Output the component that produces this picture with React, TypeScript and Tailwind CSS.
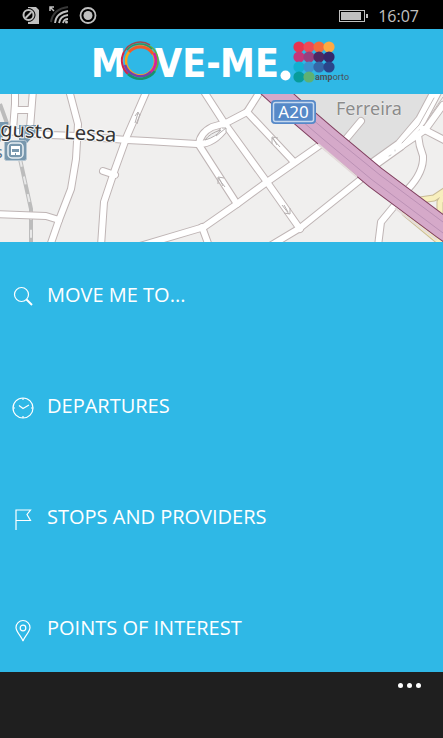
import React from "react";

const roads = [
  "M15 -4V10L13 36", "M33 -4L30 34", "M15 16H31", "M-4 120L46 122L59 126",
  "M-4 36L50 41L77 42L127 46L147 47L197 50",
  "M69 -4L78 30L76 65L71 95L59 126L50 152",
  "M147 -4L127 42L114 78L104 108L101 152", "M103 77L115 81",
  "M203 -4L225 30L267 88L300 135",
  "M199 50Q200 39 212 33L226 29L247 18L261 -4", "M199 50Q214 50 226 33",
  "M199 51L237 110", "M247 18L294 68",
  "M140 152L204 133L237 110L267 88L320 51", "M202 133L209 152", "M270 152L300 134L360 86",
  "M361 27L346 45", "M443 11L425 36L400 53", "M423 35L450 49",
  "M418 41Q419 52 423 62Q424 78 408 95", "M395 111L381 128L378 152",
];
const motorway = "M262 -14L293 14L328 44L376 84L443 134L460 146";

function CityMap() {
  return (
    <svg className="block h-[148px] w-full bg-[#f0efee]" viewBox="0 0 443 148" preserveAspectRatio="xMidYMid slice" role="img" aria-label="Map">
      <path d="M290 -2H434L421 30L400 53L376 71L330 40Z" fill="#e0e0e0" />
      <path d="M0 10L8 32M20 65L31 115V150" fill="none" stroke="#bcbcbc" strokeWidth="4" />
      <path d="M20 65L31 115V150" fill="none" stroke="#e8e8e8" strokeWidth="2" strokeDasharray="8 10" />
      <g fill="none" strokeLinejoin="round" strokeLinecap="round">
        {roads.map((d) => <path key={d} d={d} stroke="#bfb5b5" strokeWidth="8" />)}
        <path d="M437 -4L421 26L400 51L372 71" stroke="#bfb5b5" strokeWidth="12" />
        {roads.map((d) => <path key={d} d={d} stroke="#fff" strokeWidth="6" />)}
        <path d="M437 -4L421 26L400 51L372 71" stroke="#fff" strokeWidth="10" />
        <path d="M434 4L419 31L402 49M443 3L428 25" stroke="#c4bcbc" strokeWidth="1" />
        <path d="M389 62L391 61M395 57V56" stroke="#ccc" strokeWidth="1" />
        <path d="M420 106L434 104L446 96M446 98L440 108V124M405 119L440 148" stroke="#c9bc98" strokeWidth="7" />
        <path d="M420 106L434 104L446 96M446 98L440 108V124M405 119L440 148" stroke="#f7efbd" strokeWidth="5" />
      </g>
      <g fill="none" stroke="#b5b0b0" strokeWidth="1">
        <path d="M135 29L138 19M137 30L140 20M135 22L138 18L140 22" />
        <path d="M205 46Q210 39 221 36Q216 43 205 46Z" fill="#eee" />
        <path d="M216 42L226 34M222 34H226V38" />
        <path d="M218 84L225 93M218 90V83L224 84M219 84L223 92" />
        <path d="M272 44L280 53M272 50V43L278 44M273 44L277 51" />
        <path d="M282 111L289 120M290 114V120L284 119M284 111L288 118" />
      </g>
      <path d={motorway} fill="none" stroke="#80405f" strokeWidth="23" />
      <path d={motorway} fill="none" stroke="#d5a9c9" strokeWidth="21" />
      <path d="M318 50L357 83M395 114L437 146" fill="none" stroke="#e5dcdc" strokeWidth="2" />
      <path d="M289 16L323 45L371 85L443 139M298 13L332 42L380 81L443 128" fill="none" stroke="#bb91b5" strokeWidth="1" />

      <path d="M0 28H8V34L0 48ZM19 31H36V39L27 49H19Z" fill="#7897ad" />
      <rect x="4.500" y="46.500" width="22" height="20" rx="2" fill="#7897ad" stroke="#b6c7d3" />
      <rect x="8" y="49" width="15" height="15" rx="4" fill="none" stroke="#e8eff3" strokeWidth="1.500" />
      <path d="M11 52H20V61H11Z" fill="#fff" /><path d="M12 55H19V58H12ZM15 59H16V61H15Z" fill="#7897ad" />
      <g fontFamily="'Noto Sans', 'Open Sans', sans-serif">
        <text x="0" y="42" fontSize="20" fill="#333" stroke="#f7f7f7" strokeWidth="2" paintOrder="stroke" transform="rotate(3 0 42)">gusto</text>
        <text x="64" y="45" fontSize="20" fill="#333" stroke="#f7f7f7" strokeWidth="2" paintOrder="stroke" transform="rotate(3 64 45)">Lessa</text>
        <text x="-5" y="64" fontSize="16" fill="#54738a">s</text>
        <rect x="271.500" y="6.500" width="44" height="23" rx="3" fill="#5689c8" stroke="#5689c8" />
        <rect x="273.500" y="8.500" width="40" height="19" rx="2" fill="none" stroke="#c5d8ee" strokeWidth="1.500" />
        <text x="293.500" y="24" fontSize="17" fill="#fff" textAnchor="middle">A20</text>
        <text x="336" y="21" fontSize="18" fill="#8b8b8b" stroke="#eee" strokeWidth="1" paintOrder="stroke">Ferreira</text>
      </g>
    </svg>
  );
}

const dots = [
  ["#e8344f", "#ee4a55", "#f46b3c", "#fda943"],
  ["#c43679", "#98407f", "#4e2862", "#35286a"],
  ["#11b0d2", "#3b94cf", "#3468a8", "#2a458a"],
  ["#079c9b", "#5eb173"],
];

function Logo() {
  return (
    <svg className="block h-[65px] w-[260px]" viewBox="92 29 260 65" role="img" aria-label="MOVE-ME. amporto">
      <g fill="#fff" fontFamily="'DejaVu Sans Condensed', 'DejaVu Sans', sans-serif" fontWeight="700" fontStretch="condensed" fontSize="39">
        <text x="91" y="77">M</text>
        <text x="155" y="77">VE-</text>
        <text x="220" y="77">ME</text>
      </g>
      <circle cx="285.500" cy="75.500" r="5" fill="#fff" />
      <circle cx="140.500" cy="61" r="16" fill="#2fb8e6" />
      <g fill="none">
        <circle cx="140.500" cy="61" r="14.500" stroke="#f9a51b" strokeWidth="2.500" />
        <path d="M129 52A15 15 0 0 1 153 54" stroke="#f15a29" strokeWidth="3" />
        <path d="M154 53A16 16 0 0 1 147 75" stroke="#d6219c" strokeWidth="3" />
        <path d="M151 72A16 16 0 0 1 125 65" stroke="#7442ad" strokeWidth="2.500" />
        <path d="M124 52A18 18 0 0 0 128 74" stroke="#d42445" strokeWidth="2" />
        <path d="M128 74A18 18 0 0 0 155 71" stroke="#16936b" strokeWidth="2.500" />
        <path d="M155 71A18 18 0 0 0 150 46" stroke="#6cac35" strokeWidth="1.500" />
        <path d="M150 45A18 18 0 0 0 124 52" stroke="#a14b50" strokeWidth="1.500" />
        <path d="M127 50A17 17 0 0 1 152 49" stroke="#329458" strokeWidth="1.500" />
      </g>
      {dots.map((row, y) => row.map((color, x) => (
        <circle key={`${x}-${y}`} cx={299 + x * 10} cy={47 + y * 10} r="5.600" fill={color} />
      )))}
      <text x="315" y="80" fontFamily="Roboto, sans-serif" fontSize="9" fill="#4a5359"><tspan fontWeight="700">amp</tspan>orto</text>
    </svg>
  );
}

const items = [
  { label: "MOVE ME TO...", icon: <><circle cx="10.500" cy="10.500" r="7" /><path d="M15.500 15.500L21 21" strokeWidth="2" /></> },
  { label: "DEPARTURES", icon: <><circle cx="12" cy="13" r="10" /><path d="M8 10.500L12 13.500L18 10M12 3V5M12 21V23M2 13H4M20 13H22" /></> },
  { label: "STOPS AND PROVIDERS", icon: <path d="M5 24V4H19.500L16 8.500L19.500 14.500H5" /> },
  { label: "POINTS OF INTEREST", icon: <><path d="M12 24C11 20 5 15 5 10.500A7 7 0 0 1 19 10.500C19 15 13 20 12 24Z" /><circle cx="12" cy="11" r="2.800" /></> },
];

export default function App() {
  return (
    <div className="flex min-h-screen flex-col bg-[#1f1f1f] font-['Open_Sans','Noto_Sans',sans-serif]">
      <div className="flex h-[29px] items-center justify-between bg-black pr-6 pl-[22px] text-[#c0c0c0]">
        <svg className="h-[29px] w-[76px]" viewBox="22 0 76 29" fill="none" stroke="currentColor" aria-hidden="true">
          <path d="M28 7H36L39 10V24H28Z" fill="currentColor" stroke="none" />
          <circle cx="28.500" cy="15" r="6.500" fill="#000" stroke="#000" />
          <circle cx="28.500" cy="15" r="5" strokeWidth="2" /><path d="M25.500 18L31.500 12" strokeWidth="2" />
          <path d="M50 11V7H54M50 7L54 11" strokeWidth="1.500" />
          <path d="M51 22Q53 9 68 7" stroke="#383838" strokeWidth="2" />
          <path d="M55 23Q56 13 68 11M59 23Q60 16 68 15M63 23Q64 19 68 19" strokeWidth="1.800" />
          <circle cx="66.500" cy="22" r="1.500" fill="currentColor" stroke="none" />
          <circle cx="88" cy="15.500" r="7.500" strokeWidth="1.800" /><circle cx="88" cy="15.500" r="4.500" fill="currentColor" stroke="none" />
        </svg>
        <div className="flex items-center gap-[10px]">
          <svg className="h-[29px] w-[30px]" viewBox="339 0 30 29" aria-hidden="true">
            <rect x="340.500" y="10.500" width="25" height="11" fill="none" stroke="currentColor" />
            <path d="M342 12H362V20H342ZM367 14H369V18H367Z" fill="currentColor" />
          </svg>
          <time className="pt-[2px] text-[16px] leading-6">16:07</time>
        </div>
      </div>
      <header className="flex h-[65px] justify-center bg-[#2fb8e6]">
        <h1><Logo /></h1>
      </header>
      <CityMap />
      <nav className="bg-[#2fb8e6] pt-[31px] pb-[22px]">
        <ul className="flex flex-col gap-[67px]">
          {items.map(({ label, icon }) => (
            <li key={label}>
              <button type="button" className="flex h-11 w-full items-center gap-3 pl-[11px] text-left text-[20px] leading-7 text-white">
                <svg className="h-[30px] w-6 shrink-0" viewBox="0 -4 24 30" fill="none" stroke="currentColor" strokeWidth="1.200" aria-hidden="true">{icon}</svg>
                {label}
              </button>
            </li>
          ))}
        </ul>
      </nav>
      <footer className="flex justify-end pr-4">
        <button type="button" aria-label="More" className="flex h-[26px] w-[35px] items-center justify-center gap-1">
          <span className="size-[5px] rounded-full bg-white" />
          <span className="size-[5px] rounded-full bg-white" />
          <span className="size-[5px] rounded-full bg-white" />
        </button>
      </footer>
    </div>
  );
}
